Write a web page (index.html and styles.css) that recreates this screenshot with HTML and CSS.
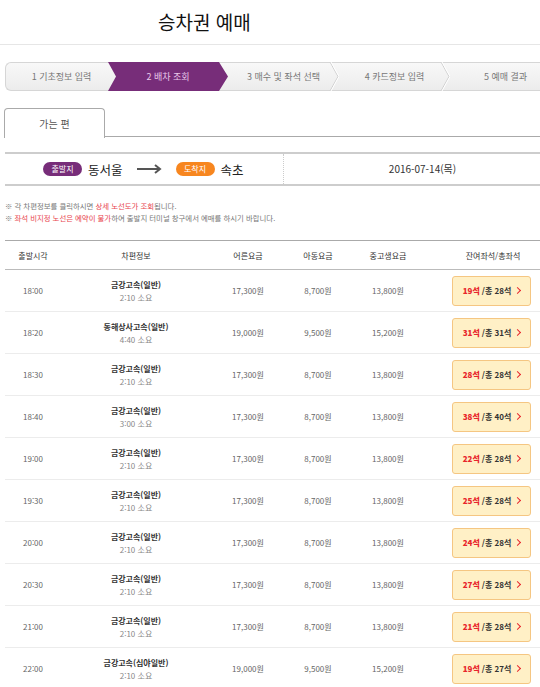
FILE: index.html
```html
<!DOCTYPE html>
<html lang="ko">
<head>
  <meta charset="UTF-8">
  <meta name="viewport" content="width=device-width, initial-scale=1.0">
  <title>승차권 예매</title>
  <link rel="stylesheet" href="styles.css">
</head>
<body>
  <div class="header">
    <h1>승차권 예매</h1>
  </div>

  <div class="container">
    <ol class="steps">
      <li class="step">1 기초정보 입력</li>
      <li class="step on">2 배차 조회</li>
      <li class="step">3 매수 및 좌석 선택
        <svg class="chev" width="10" height="29" viewBox="0 0 10 29"><polyline points="1,0 9,14.5 1,29" fill="none" stroke="#cfcfcf" stroke-width="1"/><polyline points="2,0 10,14.5 2,29" fill="none" stroke="#fff" stroke-width="1"/></svg>
      </li>
      <li class="step">4 카드정보 입력
        <svg class="chev" width="10" height="29" viewBox="0 0 10 29"><polyline points="1,0 9,14.5 1,29" fill="none" stroke="#cfcfcf" stroke-width="1"/><polyline points="2,0 10,14.5 2,29" fill="none" stroke="#fff" stroke-width="1"/></svg>
      </li>
      <li class="step">5 예매 결과</li>
    </ol>

    <div class="tabs">
      <a class="tab" href="#">가는 편</a>
    </div>

    <div class="route">
      <div class="route-place">
        <span class="badge from">출발지</span>
        <span class="place">동서울</span>
        <svg class="arrow" width="25" height="10" viewBox="0 0 25 10"><line x1="0" y1="5" x2="22" y2="5" stroke="#555" stroke-width="2"/><polyline points="18,1 23,5 18,9" fill="none" stroke="#555" stroke-width="2"/></svg>
        <span class="badge to">도착지</span>
        <span class="place">속초</span>
      </div>
      <div class="route-date">2016-07-14(목)</div>
    </div>

    <ul class="notes">
      <li>※ 각 차편정보를 클릭하시면 <em>상세 노선도가 조회</em>됩니다.</li>
      <li>※ <em>좌석 비지정 노선은 예약이 불가</em>하여 출발지 터미널 창구에서 예매를 하시기 바랍니다.</li>
    </ul>

    <table class="bus-table">
      <thead>
        <tr>
          <th class="c-time">출발시각</th>
          <th class="c-bus">차편정보</th>
          <th class="c-fare">어른요금</th>
          <th class="c-kid">아동요금</th>
          <th class="c-fare">중고생요금</th>
          <th class="c-seat">잔여좌석/총좌석</th>
        </tr>
      </thead>
      <tbody>
        <tr>
          <td>18:00</td>
          <td><strong>금강고속(일반)</strong><span class="dur">2:10 소요</span></td>
          <td>17,300원</td><td>8,700원</td><td>13,800원</td>
          <td class="c-seat"><a class="seat" href="#"><b>19석</b> /총 28석 <i></i></a></td>
        </tr>
        <tr>
          <td>18:20</td>
          <td><strong>동해상사고속(일반)</strong><span class="dur">4:40 소요</span></td>
          <td>19,000원</td><td>9,500원</td><td>15,200원</td>
          <td class="c-seat"><a class="seat" href="#"><b>31석</b> /총 31석 <i></i></a></td>
        </tr>
        <tr>
          <td>18:30</td>
          <td><strong>금강고속(일반)</strong><span class="dur">2:10 소요</span></td>
          <td>17,300원</td><td>8,700원</td><td>13,800원</td>
          <td class="c-seat"><a class="seat" href="#"><b>28석</b> /총 28석 <i></i></a></td>
        </tr>
        <tr>
          <td>18:40</td>
          <td><strong>금강고속(일반)</strong><span class="dur">3:00 소요</span></td>
          <td>17,300원</td><td>8,700원</td><td>13,800원</td>
          <td class="c-seat"><a class="seat" href="#"><b>38석</b> /총 40석 <i></i></a></td>
        </tr>
        <tr>
          <td>19:00</td>
          <td><strong>금강고속(일반)</strong><span class="dur">2:10 소요</span></td>
          <td>17,300원</td><td>8,700원</td><td>13,800원</td>
          <td class="c-seat"><a class="seat" href="#"><b>22석</b> /총 28석 <i></i></a></td>
        </tr>
        <tr>
          <td>19:30</td>
          <td><strong>금강고속(일반)</strong><span class="dur">2:10 소요</span></td>
          <td>17,300원</td><td>8,700원</td><td>13,800원</td>
          <td class="c-seat"><a class="seat" href="#"><b>25석</b> /총 28석 <i></i></a></td>
        </tr>
        <tr>
          <td>20:00</td>
          <td><strong>금강고속(일반)</strong><span class="dur">2:10 소요</span></td>
          <td>17,300원</td><td>8,700원</td><td>13,800원</td>
          <td class="c-seat"><a class="seat" href="#"><b>24석</b> /총 28석 <i></i></a></td>
        </tr>
        <tr>
          <td>20:30</td>
          <td><strong>금강고속(일반)</strong><span class="dur">2:10 소요</span></td>
          <td>17,300원</td><td>8,700원</td><td>13,800원</td>
          <td class="c-seat"><a class="seat" href="#"><b>27석</b> /총 28석 <i></i></a></td>
        </tr>
        <tr>
          <td>21:00</td>
          <td><strong>금강고속(일반)</strong><span class="dur">2:10 소요</span></td>
          <td>17,300원</td><td>8,700원</td><td>13,800원</td>
          <td class="c-seat"><a class="seat" href="#"><b>21석</b> /총 28석 <i></i></a></td>
        </tr>
        <tr>
          <td>22:00</td>
          <td><strong>금강고속(심야일반)</strong><span class="dur">2:10 소요</span></td>
          <td>19,000원</td><td>9,500원</td><td>15,200원</td>
          <td class="c-seat"><a class="seat" href="#"><b>19석</b> /총 27석 <i></i></a></td>
        </tr>
      </tbody>
    </table>
  </div>
</body>
</html>
```

FILE: styles.css
```css
html, body {
  overflow: hidden;
}
body {
  margin: 0;
  padding: 0;
  font-family: "Noto Sans CJK KR", "Noto Sans", sans-serif;
  color: #333;
  background: #fff;
}
.header {
  height: 44px;
  border-bottom: 1px solid #e6e6e6;
}
.header h1 {
  margin: 0;
  padding-left: 158px;
  font-size: 19px;
  font-weight: normal;
  line-height: 43px;
  color: #111;
}
.container {
  width: 556px;
  margin-left: 5px;
}

/* steps */
.steps {
  display: flex;
  margin: 17px 0 0;
  padding: 0;
  list-style: none;
  height: 27px;
  border: 1px solid #d6d6d6;
  border-right: none;
  border-radius: 6px 0 0 6px;
  background: linear-gradient(#f8f8f8, #ececec);
}
.step {
  position: relative;
  width: 111px;
  flex-shrink: 0;
  font-size: 9px;
  line-height: 27px;
  text-align: center;
  color: #777;
}
.step.on {
  width: 120px;
  margin: -1px 0 -1px -9px;
  height: 29px;
  line-height: 29px;
  background: #772d79;
  color: #e9c9ea;
  clip-path: polygon(0 0, 111px 0, 120px 50%, 111px 100%, 0 100%, 8px 50%);
}
.chev {
  position: absolute;
  top: -1px;
  right: 0;
}

/* tabs */
.tabs {
  margin-top: 16px;
  height: 29px;
  border-bottom: 1px solid #aaa;
  display: flex;
}
.tab {
  display: block;
  width: 99px;
  height: 29px;
  margin-left: -1px;
  border: 1px solid #aaa;
  border-bottom: none;
  border-radius: 4px 4px 0 0;
  background: #fff;
  color: #555;
  font-size: 10px;
  line-height: 30px;
  text-align: center;
  text-decoration: none;
  position: relative;
  top: 1px;
}

/* route */
.route {
  display: flex;
  margin-top: 15px;
  height: 30px;
  border-top: 2px solid #cdcdcd;
  border-bottom: 2px solid #cdcdcd;
}
.route-place {
  width: 240px;
  padding-left: 38px;
  display: flex;
  align-items: center;
  border-right: 1px dotted #ccc;
}
.badge {
  display: inline-block;
  width: 39px;
  height: 14px;
  border-radius: 7px;
  color: #fff;
  font-size: 8px;
  line-height: 14px;
  text-align: center;
}
.badge.from {
  background: #772d79;
}
.badge.to {
  background: #f7861f;
}
.place {
  margin-left: 6px;
  font-size: 12.5px;
  color: #222;
}
.arrow {
  margin: 0 14px 0 14px;
}
.route-date {
  flex: 1;
  text-align: center;
  font-size: 10px;
  line-height: 30px;
  color: #333;
}

/* notes */
.notes {
  margin: 14px 0 0;
  padding: 0;
  list-style: none;
  font-size: 7.4px;
  line-height: 12px;
  color: #777;
}
.notes em {
  font-style: normal;
  color: #e8454f;
}

/* table */
.bus-table {
  width: 556px;
  margin-top: 16px;
  border-collapse: collapse;
  table-layout: fixed;
  border-top: 1px solid #aaa;
}
.bus-table th {
  height: 28px;
  padding: 0;
  font-size: 8px;
  font-weight: normal;
  color: #333;
  border-bottom: 1px solid #bbb;
}
.c-time { width: 56px; }
.c-bus { width: 150px; }
.c-fare { width: 74px; }
.c-kid { width: 66px; }
.bus-table td {
  height: 41px;
  padding: 0;
  text-align: center;
  font-size: 8px;
  color: #666;
  border-bottom: 1px solid #ececec;
}
.bus-table td strong {
  display: block;
  color: #333;
  line-height: 13px;
}
.dur {
  display: block;
  color: #888;
  line-height: 13px;
}
.bus-table td.c-seat {
  text-align: left;
  padding-left: 27px;
}
.seat {
  display: inline-flex;
  align-items: center;
  justify-content: center;
  width: 77px;
  height: 28px;
  border: 1px solid #f5c682;
  border-radius: 3px;
  background: #fff0c6;
  color: #333;
  font-weight: bold;
  font-size: 8px;
  text-decoration: none;
}
.seat b {
  color: #e8262c;
  margin-right: 2px;
}
.seat i {
  display: inline-block;
  width: 4px;
  height: 4px;
  margin-left: 4px;
  border-top: 1.5px solid #e8262c;
  border-right: 1.5px solid #e8262c;
  transform: rotate(45deg);
}
```
